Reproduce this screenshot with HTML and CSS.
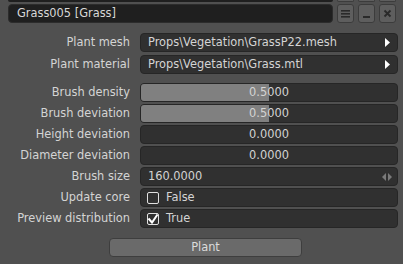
FILE: index.html
```html
<!DOCTYPE html>
<html>
<head>
<meta charset="utf-8">
<link rel="stylesheet" href="styles.css">
</head>
<body>
<div class="stub">
  <div class="stub-field"></div>
  <div class="stub-btn"></div>
  <div class="stub-btn"></div>
  <div class="stub-btn"></div>
</div>
<div class="header">
  <div class="title">Grass005 [Grass]</div>
  <div class="hbtn"><svg width="9" height="9" viewBox="0 0 9 9"><rect x="0" y="1" width="9" height="1.6" fill="#2a2a2a"/><rect x="0" y="4" width="9" height="1.6" fill="#2a2a2a"/><rect x="0" y="7" width="9" height="1.6" fill="#2a2a2a"/></svg></div>
  <div class="hbtn"><svg width="9" height="9" viewBox="0 0 9 9"><rect x="1" y="7" width="7" height="2" fill="#2a2a2a"/></svg></div>
  <div class="hbtn"><svg width="9" height="9" viewBox="0 0 9 9"><path d="M1.5 1.5 L7.5 7.5 M7.5 1.5 L1.5 7.5" stroke="#2a2a2a" stroke-width="1.8"/></svg></div>
</div>

<div class="group g1">
  <div class="label">Plant mesh</div>
  <div class="field drop"><span>Props\Vegetation\GrassP22.mesh</span><svg class="arrow" width="5" height="9" viewBox="0 0 5 9"><path d="M0 0 L5 4.5 L0 9 Z" fill="#fff"/></svg></div>
  <div class="label">Plant material</div>
  <div class="field drop"><span>Props\Vegetation\Grass.mtl</span><svg class="arrow" width="5" height="9" viewBox="0 0 5 9"><path d="M0 0 L5 4.5 L0 9 Z" fill="#fff"/></svg></div>
</div>

<div class="group g2">
  <div class="label">Brush density</div>
  <div class="field slider"><div class="fill" style="width:50%"></div><span class="val">0.5000</span></div>
  <div class="label">Brush deviation</div>
  <div class="field slider"><div class="fill" style="width:50%"></div><span class="val">0.5000</span></div>
  <div class="label">Height deviation</div>
  <div class="field slider"><span class="val">0.0000</span></div>
  <div class="label">Diameter deviation</div>
  <div class="field slider"><span class="val">0.0000</span></div>
  <div class="label">Brush size</div>
  <div class="field num"><span>160.0000</span><svg class="spin" width="10" height="8" viewBox="0 0 10 8"><path d="M4 0 L0 4 L4 8 Z M6 0 L10 4 L6 8 Z" fill="#7a7a7a"/></svg></div>
  <div class="label">Update core</div>
  <div class="field check"><span class="box"></span><span>False</span></div>
  <div class="label">Preview distribution</div>
  <div class="field check"><span class="box"><svg width="12" height="12" viewBox="0 0 12 12"><path d="M1.5 5.5 L5 9.5 L10.5 1.5" stroke="#fff" stroke-width="2" fill="none"/></svg></span><span>True</span></div>
</div>

<div class="actions">
  <div class="plant">Plant</div>
</div>
</body>
</html>
```
FILE: styles.css
```css
html, body {
  margin: 0;
  padding: 0;
  background: #505050;
}
body {
  font-family: "DejaVu Sans", Verdana, sans-serif;
  font-size: 11.4px;
  color: #d4d4d4;
  width: 403px;
  height: 264px;
  overflow: hidden;
}
.stub {
  display: flex;
  gap: 4px;
  height: 2px;
  margin: 0 7px 0 8px;
}
.stub-field {
  flex: 1;
  background: #1f1f1f;
  border-radius: 0 0 4px 4px;
}
.stub-btn {
  width: 17px;
  background: #5e5e5e;
  border: 1px solid #3c3c3c;
  border-top: none;
  border-radius: 0 0 3px 3px;
  box-sizing: border-box;
}
.header {
  display: flex;
  gap: 4px;
  height: 19px;
  margin: 2px 7px 0 8px;
}
.title {
  flex: 1;
  background: #1f1f1f;
  border: 1px solid #2c2c2c;
  border-radius: 4px;
  padding-left: 8px;
  line-height: 17px;
  color: #d8d8d8;
}
.hbtn {
  width: 17px;
  box-sizing: border-box;
  background: #5e5e5e;
  border: 1px solid #3c3c3c;
  border-radius: 3px;
  display: flex;
  align-items: center;
  justify-content: center;
}
.group {
  display: grid;
  grid-template-columns: 130px 1fr;
  column-gap: 10px;
  grid-auto-rows: 19px;
  margin-right: 5px;
}
.g1 {
  margin-top: 10px;
  row-gap: 3px;
}
.g2 {
  margin-top: 9px;
  row-gap: 2px;
}
.label {
  text-align: right;
  line-height: 19px;
  white-space: nowrap;
}
.field {
  position: relative;
  box-sizing: border-box;
  background: #303030;
  border: 1px solid #262626;
  border-radius: 4px;
  line-height: 17px;
  overflow: hidden;
  display: flex;
  align-items: center;
}
.drop {
  padding-left: 7px;
  justify-content: space-between;
  padding-right: 7px;
}
.drop span { flex: 1; }
.slider {
  justify-content: center;
}
.slider .fill {
  position: absolute;
  left: 0;
  top: 0;
  bottom: 0;
  background: #808080;
}
.slider .val {
  position: relative;
}
.num {
  padding-left: 7px;
  padding-right: 5px;
  justify-content: space-between;
}
.check {
  padding-left: 6px;
  gap: 7px;
}
.box {
  width: 12px;
  height: 12px;
  box-sizing: border-box;
  border: 1px solid #e0e0e0;
  border-radius: 2px;
  display: flex;
  align-items: center;
  justify-content: center;
}
.box svg {
  margin: -1px;
}
.actions {
  display: flex;
  justify-content: center;
  margin-top: 10px;
  padding-left: 11px;
  padding-right: 3px;
}
.plant {
  width: 193px;
  height: 19px;
  box-sizing: border-box;
  background: #6a6a6a;
  border: 1px solid #3e3e3e;
  border-radius: 4px;
  text-align: center;
  line-height: 17px;
  color: #dcdcdc;
}
```
